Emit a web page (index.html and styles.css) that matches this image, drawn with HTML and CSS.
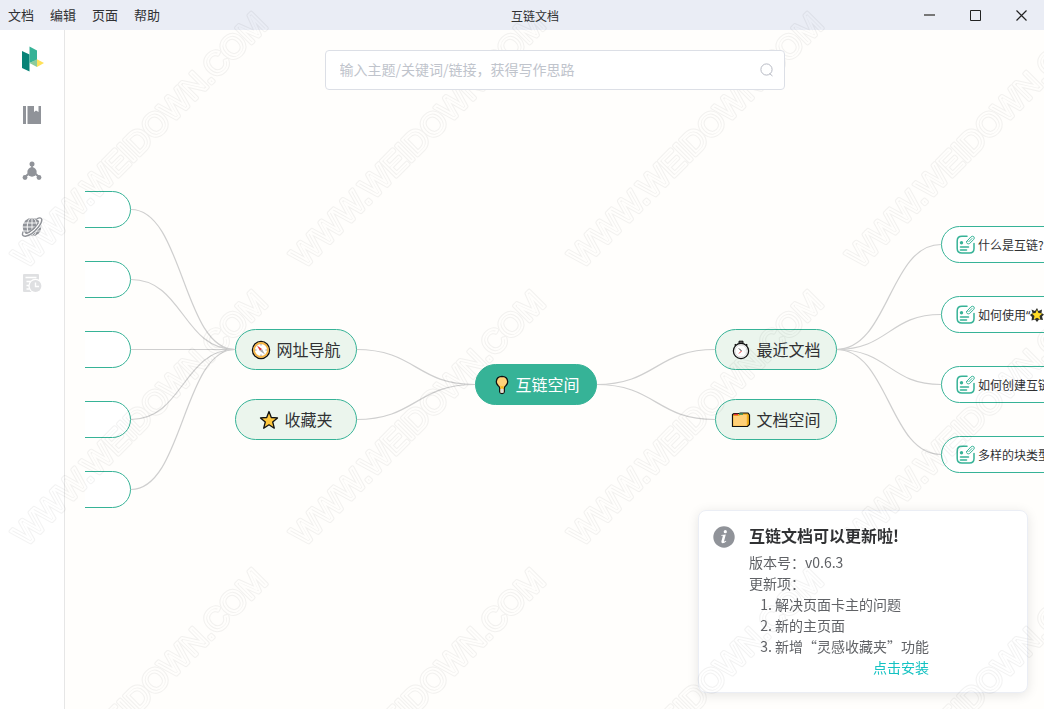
FILE: index.html
```html
<!DOCTYPE html>
<html lang="zh-CN">
<head>
<meta charset="utf-8">
<title>互链文档</title>
<link rel="stylesheet" href="styles.css">
</head>
<body>
<svg class="defs" width="0" height="0" aria-hidden="true">
  <symbol id="note" viewBox="0 0 20 20">
    <g fill="none" stroke="#36b397" stroke-width="1.500" stroke-linecap="round">
      <path d="M11 1.300H6Q1.200 1.300 1.200 6V13.500Q1.200 18 6 18H13.500Q18 18 18 13.500V8.500"/>
      <path d="M4.500 12H12.500M4.500 15H10.500" stroke-width="1.600"/>
      <path d="M10.800 6.300L14.800 2Q16.500 .6 17.800 1.700Q19 3 17.600 4.600L13.700 8.400Q12.300 9.300 11.200 8.500Q10 7.500 10.800 6.300ZM12.800 6.700L16 3.500" stroke-width="1"/>
    </g>
    <circle cx="5.500" cy="7.700" r="1.700" fill="#36b397"/>
  </symbol>
</svg>

<header class="titlebar">
  <nav class="menu" aria-label="菜单">
    <button type="button">文档</button>
    <button type="button">编辑</button>
    <button type="button">页面</button>
    <button type="button">帮助</button>
  </nav>
  <h1 class="window-title">互链文档</h1>
  <div class="window-controls">
    <button type="button" aria-label="最小化"><svg width="11" height="11"><path d="M0 5H11" stroke="#777" stroke-width="2"/></svg></button>
    <button type="button" aria-label="最大化"><svg width="11" height="11"><path d="M.5 .5H10.500V10.500H.5Z" fill="none" stroke="#222"/></svg></button>
    <button type="button" aria-label="关闭"><svg width="11" height="11"><path d="M.5 .5L10.500 10.500M10.500 .5L.5 10.500" stroke="#222" stroke-width="1.200"/></svg></button>
  </div>
</header>

<div class="app">
  <nav class="sidebar" aria-label="侧边栏">
    <a href="#home" aria-label="互链">
      <svg width="24" height="28" viewBox="0 0 24 28">
        <path d="M2 6L9.500 9.500V26.500L2 23Z" fill="#088377"/>
        <path d="M9.500 1.500L17 5.500V15L9.500 18Z" fill="#36b397"/>
        <path d="M9.500 18L17 14.300V22Z" fill="#8ccb9b"/>
        <path d="M17 14.300L24 18L17 22Z" fill="#ffe159"/>
      </svg>
    </a>
    <a href="#docs" aria-label="文档库">
      <svg width="20" height="20" viewBox="0 0 20 20" fill="#909399"><path d="M1 1H4V19H1ZM5.500 1H12V7L14 5.500L16.500 7V1H19V19H5.500Z"/></svg>
    </a>
    <a href="#graph" aria-label="关系图">
      <svg width="20" height="20" viewBox="0 0 20 20" fill="#909399"><path d="M9.200 3H10.800V8H9.200ZM6 12L7 14L3.500 16.500L2.500 15ZM14 12L13 14L16.500 16.500L17.500 15Z"/><circle cx="10" cy="3" r="2.500"/><circle cx="10" cy="11" r="4.700"/><circle cx="3" cy="16.500" r="2.400"/><circle cx="17" cy="16.500" r="2.400"/></svg>
    </a>
    <a href="#web" aria-label="网络">
      <svg width="22" height="22" viewBox="0 0 22 22">
        <circle cx="11" cy="11" r="9.300" fill="#909399"/>
        <g fill="none" stroke="#fff" stroke-width=".9"><path d="M2 7H20M1 11H21M2 15H20M11 1V21"/><ellipse cx="11" cy="11" rx="4.800" ry="9.500"/></g>
        <path d="M1.500 17.500Q2 21 7 19Q14 16 18.500 9Q22 3 19 1.700" fill="none" stroke="#fff" stroke-width="3.400"/>
        <path d="M2.200 15.500Q0 20.500 4.500 20.200Q11 19.300 17.500 11Q22.500 4 20 2.200Q18.800 1.200 15.500 3" fill="none" stroke="#909399" stroke-width="1.400"/>
        <path d="M5 17.500Q12 15.500 17.500 6.500" fill="none" stroke="#909399" stroke-width="1.300"/>
      </svg>
    </a>
    <a href="#history" aria-label="历史记录">
      <svg width="20" height="20" viewBox="0 0 20 20"><path d="M2 1H16Q17 1 17 2V19H2Q1 19 1 18V2Q1 1 2 1Z" fill="#dfe0e2"/><path d="M3.500 4.500H14.500M4.500 8.500H9M4.500 12.500H7M4.500 16H7" fill="none" stroke="#fff" stroke-width="1.500"/><circle cx="13.500" cy="13" r="7.200" fill="#fff"/><circle cx="13.500" cy="13" r="5.900" fill="#dfe0e2"/><path d="M13.500 9.500V13.500H17" fill="none" stroke="#fff" stroke-width="1.400"/></svg>
    </a>
  </nav>

  <main class="workspace">
    <form class="search" role="search">
      <input type="text" aria-label="搜索" placeholder="输入主题/关键词/链接，获得写作思路">
      <button type="submit" aria-label="搜索"><svg width="14" height="14" fill="none" stroke="#b7bac4"><circle cx="6.500" cy="6.500" r="5.600"/><path d="M9.500 10.500L12.500 13"/></svg></button>
    </form>

    <section class="mindmap" aria-label="互链空间导图">
      <svg class="edges" width="2000" height="900" fill="none" stroke="#cfcfcf" stroke-width="1.200">
        <path d="M46 179.500C98 179.500 98 319.500 150 319.500"/>
        <path d="M46 249.500C98 249.500 98 319.500 150 319.500"/>
        <path d="M46 319.500H150"/>
        <path d="M46 389.500C98 389.500 98 319.500 150 319.500"/>
        <path d="M46 459.500C98 459.500 98 319.500 150 319.500"/>
        <path d="M271 319.500C331 319.500 331 354.500 390 354.500"/>
        <path d="M271 389.500C331 389.500 331 354.500 390 354.500"/>
        <path d="M511 354.500C571 354.500 571 319.500 630 319.500"/>
        <path d="M511 354.500C571 354.500 571 389.500 630 389.500"/>
        <path d="M751 319.500C804 319.500 804 214.500 856 214.500"/>
        <path d="M751 319.500C804 319.500 804 284.500 856 284.500"/>
        <path d="M751 319.500C804 319.500 804 354.500 856 354.500"/>
        <path d="M751 319.500C804 319.500 804 424.500 856 424.500"/>
      </svg>

      <button type="button" class="leaf site row-1" aria-label="网址 1"></button>
      <button type="button" class="leaf site row-2" aria-label="网址 2"></button>
      <button type="button" class="leaf site row-3" aria-label="网址 3"></button>
      <button type="button" class="leaf site row-4" aria-label="网址 4"></button>
      <button type="button" class="leaf site row-5" aria-label="网址 5"></button>

      <button type="button" class="topic left upper">
        <svg width="20" height="20" viewBox="0 0 20 20"><circle cx="10" cy="10" r="8.500" fill="#fff" stroke="#111" stroke-width="1.500"/><circle cx="10" cy="10" r="7" fill="#fff" stroke="#f6b544" stroke-width="1.800"/><path d="M10 4V5.500M10 14.500V16M4 10H5.500M14.500 10H16" stroke="#999"/><path d="M6 5.500L11 9L9 11Z" fill="#e0383e"/><path d="M14 14.500L11 9L9 11Z" fill="#aaa"/></svg>
        <span>网址导航</span>
      </button>
      <button type="button" class="topic left lower">
        <svg width="20" height="20" viewBox="0 0 20 20"><path d="M10 1.500L12.300 7.500L18.500 7.900L13.700 12L15.300 18.200L10 14.800L4.700 18.200L6.300 12L1.500 7.900L7.700 7.500Z" fill="#ffc83d" stroke="#111" stroke-width="1.300" stroke-linejoin="round"/></svg>
        <span>收藏夹</span>
      </button>
      <button type="button" class="topic root">
        <svg width="20" height="20" viewBox="0 0 20 20"><path d="M7.700 13Q7.500 11.800 6 10.500Q4.200 8.500 4.300 6.700Q4.700 1.500 10 1.400Q15.300 1.500 15.700 6.700Q15.800 8.500 14 10.500Q12.500 11.800 12.300 13V17Q12 18.600 10 18.600Q8 18.600 7.700 17Z" fill="#ffd279" stroke="#111" stroke-width="1.300"/><path d="M8.500 14H11.500V17.800H8.500Z" fill="#ddd"/><path d="M8.500 10.500L10 11.500L11.500 10.500V13.500H8.500Z" fill="#f8b91d"/></svg>
        <span>互链空间</span>
      </button>
      <button type="button" class="topic right upper">
        <svg width="20" height="20" viewBox="0 0 20 20"><path d="M8 1.200H12V3.500H8Z" fill="#666" stroke="#111"/><path d="M3.700 5.500L5 4.300M15 4.300L16.300 5.500" stroke="#111" stroke-width="1.500"/><circle cx="10" cy="11" r="7.600" fill="#f4f4f4" stroke="#111" stroke-width="1.300"/><circle cx="10" cy="11" r="6" fill="#fff" stroke="#ddd"/><path d="M8 8.500L10.500 11" stroke="#333"/><path d="M10.500 11L8 13.500" stroke="#e0383e"/></svg>
        <span>最近文档</span>
      </button>
      <button type="button" class="topic right lower">
        <svg width="20" height="20" viewBox="0 0 20 20"><path d="M1.500 4.500L3 3.500H8L9.500 3H17L18.500 5V14.500L16.500 16.500H1.500Z" fill="#f0ad1d" stroke="#111" stroke-width="1.200"/><path d="M2.300 6H8L9.500 4.800H15.800V15.800H2.300Z" fill="#ffd078"/><path d="M3 4.500H7" stroke="#df3038" stroke-width="1.500"/><path d="M8 4H12" stroke="#2a8a67" stroke-width="1.500"/></svg>
        <span>文档空间</span>
      </button>

      <button type="button" class="leaf doc row-a"><svg width="20" height="20"><use href="#note"/></svg><span>什么是互链?</span></button>
      <button type="button" class="leaf doc row-b"><svg width="20" height="20"><use href="#note"/></svg><span>如何使用<span class="quote">“</span></span><svg class="spark" width="14" height="14" viewBox="0 0 14 14"><path d="M7 0L8.500 3L12 1.500L11.500 5L14 6.500L12 8.500L13 12L9 11.500L7 14L5 11.500L1.500 12.500L2 9L0 7L2.500 5L1.500 1.500L5 3Z" fill="#2f312b"/><path d="M7 1.700L8.500 5L12.300 5.500L9.500 8L10.300 11.500L7 9.800L3.700 11.500L4.500 8L1.700 5.500L5.500 5Z" fill="#ffdc25"/></svg></button>
      <button type="button" class="leaf doc row-c"><svg width="20" height="20"><use href="#note"/></svg><span>如何创建互链</span></button>
      <button type="button" class="leaf doc row-d"><svg width="20" height="20"><use href="#note"/></svg><span>多样的块类型</span></button>
    </section>
  </main>
</div>

<aside class="notice" role="status">
  <svg width="22" height="22" viewBox="0 0 22 22"><circle cx="11" cy="11" r="10.700" fill="#909399"/><g fill="#fff"><circle cx="12.300" cy="5.700" r="1.600"/><path d="M8.200 9L12.800 8.500L11 15.300Q11 16 13 14.800L13.300 15.200Q11.500 17.400 9.500 17.300Q8 17 8.400 15.300L9.900 9.800L8 9.500Z"/></g></svg>
  <div class="notice-body">
    <h2>互链文档可以更新啦!</h2>
    <p>版本号：v0.6.3</p>
    <p>更新项：</p>
    <ol>
      <li>解决页面卡主的问题</li>
      <li>新的主页面</li>
      <li>新增“灵感收藏夹”功能</li>
    </ol>
    <a href="#install">点击安装</a>
  </div>
</aside>

<svg class="watermark" aria-hidden="true">
  <defs>
    <g id="mark">
      <text class="mark-outer" transform="rotate(-45)">WWW.WEIDOWN.COM</text>
      <text class="mark-inner" transform="rotate(-45)">WWW.WEIDOWN.COM</text>
    </g>
    <mask id="outline" maskUnits="userSpaceOnUse" x="0" y="0" width="100%" height="100%">
      <use href="#mark" x="26" y="269"/><use href="#mark" x="304" y="269"/><use href="#mark" x="582" y="269"/><use href="#mark" x="860" y="269"/>
      <use href="#mark" x="26" y="547"/><use href="#mark" x="304" y="547"/><use href="#mark" x="582" y="547"/><use href="#mark" x="860" y="547"/>
      <use href="#mark" x="26" y="825"/><use href="#mark" x="304" y="825"/><use href="#mark" x="582" y="825"/><use href="#mark" x="860" y="825"/>
    </mask>
  </defs>
  <rect class="mark-ink" width="100%" height="100%" mask="url(#outline)"/>
</svg>
</body>
</html>
```
FILE: styles.css
```css
* { box-sizing: border-box; }

body {
  margin: 0;
  height: 100vh;
  display: flex;
  flex-direction: column;
  overflow: hidden;
  background: #fffefc;
  color: #303133;
  font-family: "Noto Sans CJK SC", "Noto Sans", sans-serif;
}

button {
  padding: 0;
  border: 0;
  background: none;
  color: inherit;
  font: inherit;
}

h1, h2, p, ol { margin: 0; }
svg { flex: none; }
.defs { position: absolute; }

.titlebar {
  flex: none;
  display: flex;
  height: 30px;
  align-items: center;
  background: #eaedf5;
}
.menu {
  display: flex;
  gap: 16px;
  padding: 0 4px 2px 8px;
  font-size: 13px;
}
.window-title {
  flex: 1;
  text-align: center;
  font-size: 12px;
  font-weight: 400;
}
.window-controls { display: flex; height: 100%; }
.window-controls button {
  display: grid;
  place-items: center;
  width: 46px;
  padding: 1px 0 0 1px;
}

.app { flex: 1; display: flex; min-height: 0; }
.sidebar {
  flex: none;
  width: 65px;
  display: flex;
  flex-direction: column;
  padding-top: 1px;
  background: #fff;
  border-right: 1px solid #e6e6e6;
}
.sidebar a {
  display: grid;
  place-items: center;
  height: 56px;
}

.workspace {
  position: relative;
  flex: 1;
  min-width: 0;
  padding: 20px;
}
.search {
  position: relative;
  z-index: 1;
  display: flex;
  align-items: center;
  width: 460px;
  max-width: 100%;
  height: 40px;
  margin: 0 auto;
  padding: 0 10px 0 14px;
  border: 1px solid #dcdfe6;
  border-radius: 4px;
  background: #fff;
}
.search input {
  flex: 1;
  min-width: 0;
  padding: 0 0 2px;
  border: 0;
  outline: 0;
  background: none;
  font: inherit;
  font-size: 14px;
}
.search input::placeholder { color: #c0c4cc; }
.search button { display: flex; }

.mindmap {
  position: absolute;
  inset: 0 0 0 20px;
  overflow: hidden;
}
.edges { position: absolute; left: 0; top: 0; }

.topic, .leaf {
  position: absolute;
  display: flex;
  align-items: center;
  border: 1px solid #36b397;
  white-space: nowrap;
}
.topic {
  justify-content: center;
  gap: 5px;
  width: 122px;
  height: 41px;
  border-radius: 21px;
  background: #ebf5ed;
  font-size: 16px;
}
.topic span { padding-bottom: 1px; }
.topic.left { left: 150px; }
.topic.right { left: 630px; }
.topic.upper { top: 299px; }
.topic.lower { top: 369px; }
.topic.root {
  left: 390px;
  top: 334px;
  gap: 3px;
  background: #36b397;
  color: #fff;
}

.leaf {
  height: 37px;
  border-radius: 19px;
  background: #fff;
  font-size: 12px;
}
.site { left: -75px; width: 121px; }
.doc { left: 856px; width: 160px; padding-left: 14px; gap: 2px; }
.doc .spark { margin-left: -2px; }
.quote { font-family: "Noto Sans", sans-serif; }
.row-1 { top: 161px; }
.row-2 { top: 231px; }
.row-3 { top: 301px; }
.row-4 { top: 371px; }
.row-5 { top: 441px; }
.row-a { top: 196px; }
.row-b { top: 266px; }
.row-c { top: 336px; }
.row-d { top: 406px; }

.notice {
  position: fixed;
  right: 16px;
  bottom: 16px;
  display: flex;
  gap: 14px;
  width: 330px;
  padding: 14px 26px 14px 14px;
  border: 1px solid #ebeef5;
  border-radius: 8px;
  background: #fff;
  box-shadow: 0 2px 12px rgba(0, 0, 0, 0.1);
  color: #606266;
  font-size: 14px;
  line-height: 21px;
}
.notice > svg { margin-top: 1px; }
.notice-body { display: flex; flex-direction: column; }
.notice h2 {
  margin-bottom: 6px;
  color: #303133;
  font-size: 16px;
  font-weight: 700;
}
.notice ol { padding-left: 26px; }
.notice a {
  align-self: flex-end;
  color: #13c2c2;
  text-decoration: none;
}

.watermark {
  position: fixed;
  inset: 0;
  width: 100%;
  height: 100%;
  pointer-events: none;
}
.watermark text {
  font-family: "Liberation Sans", Arial, sans-serif;
  font-size: 32px;
  fill: none;
  stroke-linejoin: round;
}
.mark-outer { stroke: #fff; stroke-width: 4px; }
.mark-inner { stroke: #000; stroke-width: 2px; }
.mark-ink { fill: rgba(0, 0, 0, 0.05); }
```
